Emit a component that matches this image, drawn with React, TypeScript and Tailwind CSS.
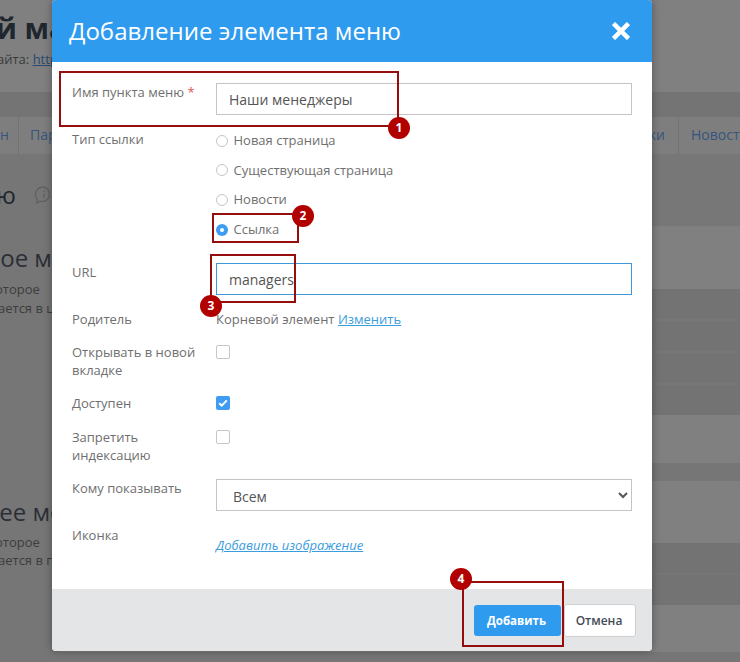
const font = { fontFamily: '"Open Sans", "Noto Sans", sans-serif' };

function Backdrop() {
  return (
    <div className="h-[662px] overflow-hidden bg-[#767676] text-[#20262e]">
      <div className="h-[92px] bg-[#808080]">
        <div className="ml-[-4px] h-[57px] pt-[5px] text-[29px] leading-[46px] font-bold whitespace-nowrap">й ма</div>
        <div className="ml-[-3px] text-[13px] leading-[4px] text-[#3a3a3a] whitespace-nowrap">
          айта: <span className="underline text-[#284a72]">http</span>
        </div>
      </div>
      <div className="h-[25px] bg-[#747474]" />
      <div className="flex h-[37px] justify-between bg-[#7e7e7e] text-[14px] leading-[36px] text-[#37557c] whitespace-nowrap">
        <div className="flex">
          <span className="w-[19px] border-r border-[#727272] text-[#37557c]">н</span>
          <span className="pl-[11px]">Пар</span>
        </div>
        <div className="flex w-[100px]">
          <span className="w-[39px] border-r border-[#727272] text-right pr-[13px]">ки</span>
          <span className="pl-[12px]">Новост</span>
        </div>
      </div>
      <div className="flex">
        <div className="w-[60px] shrink-0 overflow-hidden whitespace-nowrap">
          <div className="flex h-[72px] items-start pt-[25px]">
            <span className="text-[24px] leading-[32px] ml-[-4px]">ю</span>
            <svg className="ml-[19px] mt-[7px] shrink-0" width="18" height="18" viewBox="0 0 18 18" fill="none" stroke="#5f5f5f" strokeWidth="1.2">
              <path d="M9 1.2a7.4 7.4 0 0 1 0 14.2H4.5L1.8 17l.7-3.6A7.3 7.3 0 0 1 9 1.2z" />
              <path d="M9 7.5v4.5M9 4.6v1.3" />
            </svg>
          </div>
          <div className="h-[44px] pt-[18px] text-[24px] leading-[28px] ml-[-15px] text-[#2a2f36]">ное ме</div>
          <div className="mt-[10px] text-[13px] leading-[18px] text-[#3d3d3d] ml-[-5px]">оторое</div>
          <div className="mt-[1px] text-[13px] leading-[18px] text-[#3d3d3d] ml-[-2px]">ается в ц</div>
          <div className="mt-[181px] text-[24px] leading-[28px] ml-[-16px] text-[#2a2f36]">нее ме</div>
          <div className="mt-[7px] text-[13px] leading-[18px] text-[#3d3d3d] ml-[-5px]">оторое</div>
          <div className="text-[13px] leading-[18px] text-[#3d3d3d] ml-[-2px]">ается в п</div>
        </div>
        <div className="flex-1">
          <div className="h-[72px] bg-[#777777]" />
          <div className="h-[63px] bg-[#808080]" />
          <div className="h-[30px] bg-[#727372]" />
          <div className="mt-[2px] h-[30px] bg-[#727372]" />
          <div className="mt-[2px] h-[30px] bg-[#727372]" />
          <div className="mt-[2px] h-[30px] bg-[#727372]" />
          <div className="h-[48px] bg-[#808080]" />
          <div className="h-[18px] bg-[#767676]" />
          <div className="h-[62px] bg-[#808080]" />
          <div className="h-[30px] bg-[#727372]" />
          <div className="mt-[2px] h-[30px] bg-[#727372]" />
          <div className="h-[47px] bg-[#808080]" />
          <div className="h-[10px] bg-[#767676]" />
        </div>
      </div>
    </div>
  );
}

function Radio({ label, checked }: { label: string; checked?: boolean }) {
  return (
    <div className="flex h-[29.6px] items-center">
      {checked ? (
        <span className="flex h-[12px] w-[12px] items-center justify-center rounded-full bg-[#3f9cf3]">
          <span className="h-[4px] w-[4px] rounded-full bg-white" />
        </span>
      ) : (
        <span className="h-[12px] w-[12px] rounded-full border border-[#c6c6c6] bg-white" />
      )}
      <span className="ml-[5.5px] mt-[-1px] text-[13px] leading-[18px] text-[#6f6f6f]">{label}</span>
    </div>
  );
}

function Check({ checked }: { checked?: boolean }) {
  if (checked) {
    return (
      <span className="mt-[2px] flex h-[14px] w-[14px] items-center justify-center rounded-[2px] bg-[#3f9cf3]">
        <svg width="10" height="10" viewBox="0 0 10 10" fill="none" stroke="white" strokeWidth="2">
          <path d="M1.2 5.2l2.6 2.4 5-5.2" />
        </svg>
      </span>
    );
  }
  return <span className="mt-[2px] block h-[14px] w-[14px] rounded-[2px] border border-[#c6c6c6] bg-white" />;
}

function Row({ label, children, className }: { label: React.ReactNode; children: React.ReactNode; className?: string }) {
  return (
    <div className={"grid grid-cols-[144px_1fr] " + (className ?? "mt-[15px]")}>
      <div className="pr-[16px] text-[13px] leading-[18px] text-[#6f6f6f]">{label}</div>
      <div>{children}</div>
    </div>
  );
}

function Badge({ n, className }: { n: number; className: string }) {
  return (
    <span className={"absolute flex h-[22px] w-[22px] items-center justify-center rounded-full bg-[#b00000] text-[12px] font-bold text-white " + className}>
      {n}
    </span>
  );
}

function Modal() {
  return (
    <div className="absolute left-[52px] top-0 w-[600px] overflow-hidden rounded-[4px] bg-white shadow-[0_0_8px_rgba(0,0,0,0.35)]">
      <div className="flex h-[62px] items-center justify-between bg-[#2f9bef] pl-[17px] pr-[22px]">
        <h2 className="text-[24px] leading-[32px] text-white">Добавление элемента меню</h2>
        <svg width="18" height="18" viewBox="0 0 18 18" fill="none" stroke="white" strokeWidth="4.5">
          <path d="M1.5 1.5l15 15M16.5 1.5l-15 15" />
        </svg>
      </div>
      <div className="h-[527px] px-[20px] pt-[21px]">
        <Row label={<>Имя пункта меню <span className="text-[#e25555]">*</span></>} className="mt-0">
          <input
            readOnly
            value="Наши менеджеры"
            className="h-[32px] w-full border border-[#c4c4c4] px-[12px] text-[14px] text-[#555555] outline-none"
            style={font}
          />
        </Row>
        <div className="mt-[11px] grid grid-cols-[144px_1fr]">
          <div className="pt-[4px] text-[13px] leading-[18px] text-[#6f6f6f]">Тип ссылки</div>
          <div>
            <Radio label="Новая страница" />
            <Radio label="Существующая страница" />
            <Radio label="Новости" />
            <Radio label="Ссылка" checked />
          </div>
        </div>
        <Row label="URL" className="mt-[19px]">
          <input
            readOnly
            value="managers"
            className="h-[32px] w-full border border-[#3d97d8] px-[12px] text-[14px] text-[#555555] outline-none"
            style={font}
          />
        </Row>
        <Row label="Родитель">
          <div className="text-[13px] leading-[18px] text-[#6f6f6f]">
            Корневой элемент <a className="text-[#3b9ddd] underline">Изменить</a>
          </div>
        </Row>
        <Row label="Открывать в новой вкладке">
          <Check />
        </Row>
        <Row label="Доступен">
          <Check checked />
        </Row>
        <Row label="Запретить индексацию" className="mt-[16px]">
          <Check />
        </Row>
        <Row label="Кому показывать">
          <select className="h-[32px] w-full border border-[#c4c4c4] bg-white px-[12px] pt-[2px] text-[14px] text-[#555555] outline-none" style={font}>
            <option>Всем</option>
          </select>
        </Row>
        <Row label="Иконка">
          <a className="mt-[10px] block text-[13px] leading-[18px] italic text-[#3b9ddd] underline">Добавить изображение</a>
        </Row>
      </div>
      <div className="flex h-[62px] items-start justify-end gap-[3px] bg-[#e4e5e7] pr-[16px] pt-[15px]">
        <button className="mt-[1px] h-[31px] w-[87px] rounded-[3px] bg-[#2f9bef] pr-[2px] text-[11.5px] font-bold text-white" style={font}>
          Добавить
        </button>
        <button className="h-[33px] w-[72px] rounded-[3px] border border-[#cfcfcf] bg-white pr-[2px] text-[12px] font-semibold text-[#444c55]" style={font}>
          Отмена
        </button>
      </div>
    </div>
  );
}

export default function App() {
  return (
    <div className="relative h-[662px] w-[740px] overflow-hidden" style={font}>
      <Backdrop />
      <Modal />
      <div className="absolute left-[59px] top-[71px] h-[56px] w-[340px] border-2 border-[#960d0d]" />
      <div className="absolute left-[212px] top-[213px] h-[30px] w-[87px] border-2 border-[#960d0d]" />
      <div className="absolute left-[210px] top-[254px] h-[49px] w-[86px] border-2 border-[#960d0d]" />
      <div className="absolute left-[462px] top-[581px] h-[66px] w-[102px] border-2 border-[#960d0d]" />
      <Badge n={1} className="left-[388px] top-[117px]" />
      <Badge n={2} className="left-[292px] top-[205px]" />
      <Badge n={3} className="left-[200px] top-[295px]" />
      <Badge n={4} className="left-[450px] top-[568px]" />
    </div>
  );
}
